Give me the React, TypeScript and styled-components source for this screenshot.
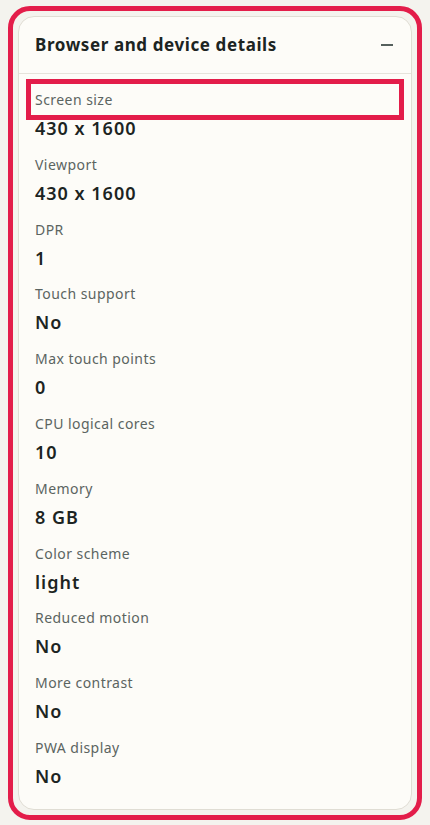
import React from "react";
import styled, { createGlobalStyle } from "styled-components";

const GlobalStyle = createGlobalStyle`
  html, body {
    margin: 0;
    padding: 0;
    background: #f4f3ee;
  }
  body {
    font-family: "Noto Sans", Inter, "Noto Sans CJK JP", sans-serif;
    -webkit-font-smoothing: antialiased;
  }
`;

const Page = styled.div`
  padding: 6px 8px 7px;
`;

const Highlight = styled.div`
  border: 5px solid #e31d4a;
  border-radius: 22px;
  padding: 5px;
`;

const Card = styled.section`
  background: #fdfcf8;
  border: 1px solid #e0ddd4;
  border-radius: 16px;
  overflow: hidden;
`;

const Header = styled.header`
  display: flex;
  align-items: center;
  justify-content: space-between;
  height: 56px;
  padding: 0 16px;
  border-bottom: 1px solid #e6e3db;
`;

const Title = styled.h2`
  margin: 0;
  font-size: 17px;
  line-height: 24px;
  font-weight: 700;
  color: #1c2422;
  letter-spacing: 0.6px;
`;

const Toggle = styled.span`
  display: block;
  width: 12px;
  height: 2.5px;
  margin-right: 2px;
  background: #55605d;
`;

const List = styled.dl`
  margin: 0;
  padding: 14px 16px 21px;
`;

const Item = styled.div`
  margin-bottom: 12.8px;

  &:last-child {
    margin-bottom: 0;
  }
`;

const Label = styled.dt<{ $focused?: boolean }>`
  font-size: 14px;
  line-height: 23px;
  color: #5b6461;
  letter-spacing: 0.45px;
  margin-bottom: 5px;
  outline: ${p => (p.$focused ? "5px solid #e31d4a" : "none")};
  outline-offset: 4px;
`;

const Value = styled.dd`
  margin: 0;
  font-size: 18px;
  line-height: 24px;
  font-weight: 600;
  color: #1c2422;
  letter-spacing: 1px;
`;

const details: [string, string][] = [
  ["Screen size", "430 x 1600"],
  ["Viewport", "430 x 1600"],
  ["DPR", "1"],
  ["Touch support", "No"],
  ["Max touch points", "0"],
  ["CPU logical cores", "10"],
  ["Memory", "8 GB"],
  ["Color scheme", "light"],
  ["Reduced motion", "No"],
  ["More contrast", "No"],
  ["PWA display", "No"],
];

export default function App() {
  return (
    <>
      <GlobalStyle />
      <Page>
        <Highlight>
          <Card>
            <Header>
              <Title>Browser and device details</Title>
              <Toggle aria-label="Collapse" />
            </Header>
            <List>
              {details.map(([label, value], i) => (
                <Item key={label}>
                  <Label $focused={i === 0}>{label}</Label>
                  <Value>{value}</Value>
                </Item>
              ))}
            </List>
          </Card>
        </Highlight>
      </Page>
    </>
  );
}
